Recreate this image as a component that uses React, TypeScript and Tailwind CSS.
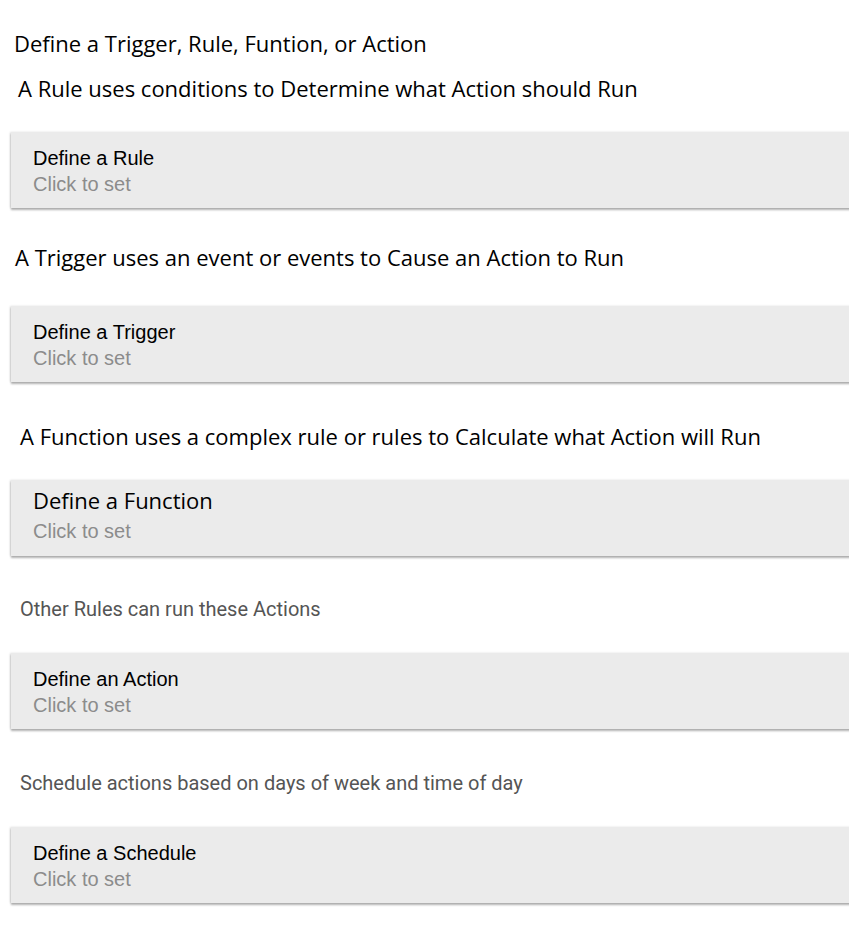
import React from 'react';

type CardProps = {
  title: string;
  big?: boolean;
};

const SetCard: React.FC<CardProps> = ({ title, big }) => (
  <div className="ml-[11px] w-[880px] h-[76px] bg-[#ebebeb] shadow-[0_2px_2px_rgba(0,0,0,0.3),-1px_0_2px_rgba(0,0,0,0.12)] pl-[22px] cursor-pointer">
    {big ? (
      <div className="pt-[5px]">
        <div className="font-['Open_Sans',sans-serif] text-[22px] leading-[30px] text-black">{title}</div>
        <div className="mt-[3px] font-['Liberation_Sans',Arial,sans-serif] text-[20px] leading-[26px] text-[#8c8c8c]">Click to set</div>
      </div>
    ) : (
      <div className="pt-[13px] font-['Liberation_Sans',Arial,sans-serif] text-[20px] leading-[26px]">
        <div className="text-black">{title}</div>
        <div className="text-[#8c8c8c]">Click to set</div>
      </div>
    )}
  </div>
);

const Heading: React.FC<{ children: React.ReactNode; className?: string }> = ({ children, className }) => (
  <div className={`font-['Open_Sans',sans-serif] text-[22px] leading-[28px] text-black whitespace-nowrap ${className ?? ''}`}>
    {children}
  </div>
);

const Note: React.FC<{ children: React.ReactNode; className?: string }> = ({ children, className }) => (
  <div className={`font-['Roboto',sans-serif] text-[20px] leading-[24px] text-[#555] pl-[20px] ${className ?? ''}`}>
    {children}
  </div>
);

export default function App() {
  return (
    <div className="w-[849px] h-[931px] overflow-hidden bg-white">
      <Heading className="pl-[14px] pt-[29px]">Define a Trigger, Rule, Funtion, or Action</Heading>
      <Heading className="pl-[18px] mt-[17px]">A Rule uses conditions to Determine what Action should Run</Heading>
      <div className="mt-[30px]">
        <SetCard title="Define a Rule" />
      </div>

      <Heading className="pl-[15px] mt-[35px]">A Trigger uses an event or events to Cause an Action to Run</Heading>
      <div className="mt-[35px]">
        <SetCard title="Define a Trigger" />
      </div>

      <Heading className="pl-[20px] mt-[40px]">A Function uses a complex rule or rules to Calculate what Action will Run</Heading>
      <div className="mt-[30px]">
        <SetCard title="Define a Function" big />
      </div>

      <Note className="mt-[41px]">Other Rules can run these Actions</Note>
      <div className="mt-[32px]">
        <SetCard title="Define an Action" />
      </div>

      <Note className="mt-[42px]">Schedule actions based on days of week and time of day</Note>
      <div className="mt-[32px]">
        <SetCard title="Define a Schedule" />
      </div>
    </div>
  );
}
